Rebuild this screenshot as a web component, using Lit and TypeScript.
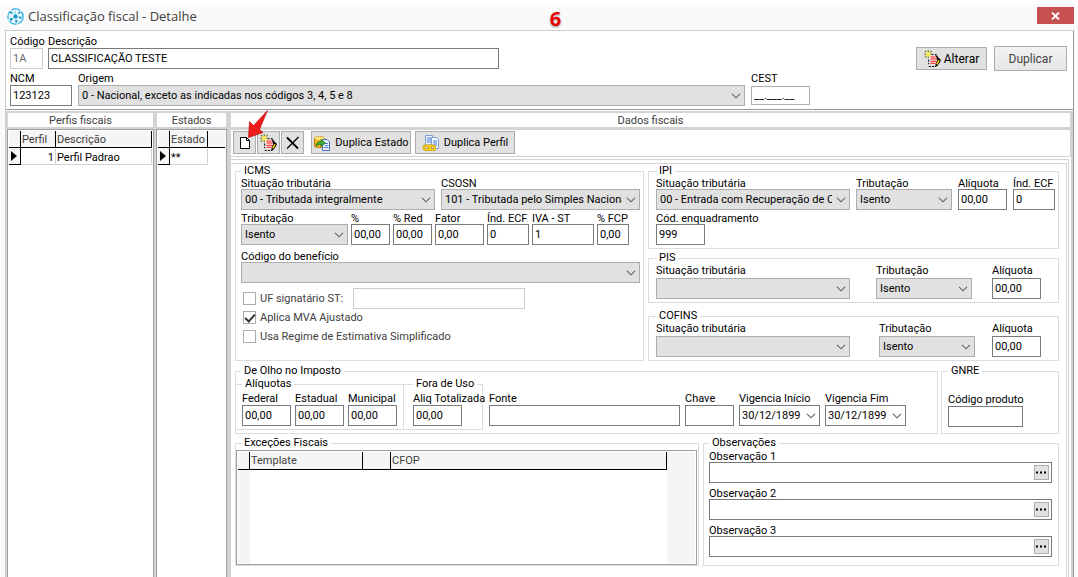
import { LitElement, html, svg, css } from "lit";
import { customElement } from "lit/decorators.js";

const chevron = html`<svg class="chev" width="10" height="6" viewBox="0 0 10 6" aria-hidden="true">
  <path d="M1 0.8 L5 4.8 L9 0.8" fill="none" stroke="#606060" stroke-width="1.1" />
</svg>`;

const noteShape = svg`
  <path d="M5.5 4.5 H11.5 L13.5 6.5 V13.5 H4.5 V8" fill="#fff" />
  <path d="M4.5 9v4.5M7 4.5h4.5l1.5 1.5M4.5 15.5h7" fill="none" stroke="#000" stroke-dasharray="2 1" />
  <path d="M6 6.5h5M6 8.5h6M6 10.5h6M6 12.5h5" stroke="#f00000" />
  <path d="M4 0v2M4 6v2M0 4h2M6 4h2M0.8 0.8l1.6 1.6M7.2 0.8L5.6 2.4M0.8 7.2l1.6-1.6" stroke="#77701c" />
  <path d="M2.2 2.2l3.6 3.6M5.8 2.2L2.2 5.8" stroke="#ffee30" stroke-width="1.4" />
  <path d="M10.5 4 L16 9.5 L15 11.5 L12.5 15 L10.5 15.5 L11 13 L12.5 9.5z" fill="#000" />
  <path d="M14.2 9.6 L12 13.6" stroke="#ffd800" stroke-width="1.4" />`;

const icons = {
  app: html`<svg width="17" height="17" viewBox="0 0 17 17" aria-hidden="true">
    <circle cx="8.5" cy="8.5" r="7.6" fill="#eaf8fd" stroke="#2fb1d9" stroke-width="1.3" stroke-dasharray="9 1.5" />
    <path d="M8.5 8.5L4 4M8.5 8.5L12.5 4.5M8.5 8.5L13.5 9.5M8.5 8.5L9.5 13.5M8.5 8.5L4 11.5M8.5 8.5L8 3" stroke="#5cc4e4" stroke-width="0.8" />
    <g fill="#1597c4"><circle cx="8.5" cy="8.5" r="2" /><circle cx="4" cy="4.6" r="1.2" /><circle cx="12.4" cy="4.6" r="1.1" />
    <circle cx="13.3" cy="9.6" r="1.2" /><circle cx="9.4" cy="13.2" r="1.2" /><circle cx="4.2" cy="11.4" r="1.3" /></g>
  </svg>`,
  edit: html`<svg width="17" height="17" viewBox="0 0 16 16" aria-hidden="true">${noteShape}</svg>`,
  page: html`<svg width="12" height="14" viewBox="0 0 12 14" aria-hidden="true">
    <path d="M1.5 1.5 H7.5 L10.5 4.5 V12.5 H1.5z" fill="#fff" stroke="#000" />
    <path d="M7.5 1.5 V4.5 H10.5" fill="none" stroke="#000" />
  </svg>`,
  remove: html`<svg width="14" height="14" viewBox="0 0 14 14" aria-hidden="true">
    <path d="M1 1.5 L12 12.5" stroke="#000" stroke-width="1.8" /><path d="M12.5 1 L1 12.5" stroke="#000" stroke-width="1.3" />
  </svg>`,
  state: html`<svg width="18" height="18" viewBox="0 0 18 18" aria-hidden="true">
    <path d="M1.5 4.5 C1.5 2 11.5 2 11.5 4.5 V12 C11.5 14 1.5 14 1.5 12z" fill="#f5b81c" stroke="#b57a06" />
    <ellipse cx="6.5" cy="4.3" rx="4.6" ry="1.7" fill="#ffe27a" />
    <path d="M9.5 5.5 H14 L16.5 8 V16.5 H9.5z" fill="#eef4ff" stroke="#4a6fb5" />
    <path d="M12 9.5h3M12 11.5h3.5M11 13.5h4.5" stroke="#4a7fd8" />
    <path d="M3 12 C3 9 5 7.5 8 7.5 V5.5 L12.5 9 L8 12.5 V10.3 C6 10.3 4.5 11 3 12z" fill="#3fae3a" stroke="#15681a" stroke-width="0.7" />
  </svg>`,
  profile: html`<svg width="18" height="18" viewBox="0 0 18 18" aria-hidden="true">
    <path d="M3.5 1.5 H10.5 V11.5 H3.5z" fill="#eef4ff" stroke="#7f9cd0" />
    <path d="M5 4h4M5 6h4M5 8h4" stroke="#4a7fd8" />
    <path d="M9.5 3.5 H14.5 L16.5 5.5 V14.5 H9.5z" fill="#f4f8ff" stroke="#7f9cd0" />
    <path d="M11 7h4M11 9h4M11 11h4" stroke="#4a7fd8" />
    <rect x="1.8" y="11.8" width="7" height="4" rx="2" fill="none" stroke="#b88a00" stroke-width="2.4" />
    <rect x="6.8" y="11.8" width="6" height="4" rx="2" fill="none" stroke="#b88a00" stroke-width="2.4" />
    <rect x="1.8" y="11.8" width="7" height="4" rx="2" fill="none" stroke="#ffdc28" stroke-width="1.2" />
    <rect x="6.8" y="11.8" width="6" height="4" rx="2" fill="none" stroke="#ffdc28" stroke-width="1.2" />
  </svg>`,
  marker: html`<svg class="marker" width="6" height="10" viewBox="0 0 6 10" aria-hidden="true"><path d="M0 0 L6 5 L0 10z" /></svg>`,
};

@customElement("app-root")
export class AppRoot extends LitElement {
  static styles = css`
    :host {
      display: block;
      font-family: Roboto, "Liberation Sans", sans-serif;
      font-size: 11px;
      line-height: 12px;
      color: #000;
    }
    * { box-sizing: border-box; }
    .window {
      display: flex;
      flex-direction: column;
      min-height: 100vh;
      padding: 0 4px 0 5px;
      border-top: 4px solid #fff;
      background: #fafafa;
      position: relative;
    }
    .titlebar {
      display: flex;
      align-items: center;
      gap: 4px;
      height: 26px;
      padding: 0 0 2px 2px;
      font: 13px/18px "Open Sans", "Noto Sans", sans-serif;
      color: #404040;
    }
    .titlebar h1 { margin: 0; font: inherit; flex: 1; }
    .titlebar svg { flex: none; }
    .close {
      align-self: flex-start;
      display: grid;
      place-items: center;
      width: 37px;
      height: 17px;
      margin-top: 3px;
      padding: 0;
      border: 0;
      background: #c75050;
    }
    .step {
      position: absolute;
      left: 51%;
      top: 2px;
      font: 700 20px/26px "Open Sans", sans-serif;
      color: #e60000;
      text-shadow: 0 0 2px #fff, 0 1px 2px #777;
    }
    .pointer { position: absolute; left: 247px; top: 106px; pointer-events: none; }
    .client {
      flex: 1;
      display: flex;
      flex-direction: column;
      border: 1px solid #ccc;
      border-right-color: #999;
      border-bottom: 0;
      background: #fff;
    }
    .header {
      display: flex;
      justify-content: space-between;
      padding: 5px 6px 3px 4px;
      border-bottom: 1px solid #999;
    }
    .ident { flex: 1; display: flex; flex-direction: column; gap: 4px; }
    .ident-top { display: grid; grid-template-columns: 33px minmax(0, 451fr) 306fr; gap: 5px; }
    .ident-bottom { display: grid; grid-template-columns: 62px minmax(0, 1fr) 59px; gap: 6px; }
    .header-actions { display: flex; align-items: flex-start; gap: 7px; padding-top: 11px; margin-left: 106px; }

    .field { display: flex; flex-direction: column; min-width: 0; }
    .field > label { white-space: nowrap; }
    .inner .field > label { height: 12px; line-height: 14px; }
    .spaced .field { gap: 2px; }
    input, select, button { font: inherit; color: inherit; border-radius: 0; }
    .text {
      width: 100%;
      height: 21px;
      padding: 0 2px;
      border: 1px solid #7a7a7a;
      background: #fff;
      outline: 0;
    }
    .text.off { border-color: #ccc; color: #6d6d6d; }
    .text.mask { height: 19px; margin-top: 1px; border-color: #b0b0b0; }
    .combo { display: grid; align-items: center; min-width: 0; }
    .combo > * { grid-area: 1 / 1; }
    .combo select {
      appearance: none;
      width: 100%;
      height: 21px;
      padding: 0 17px 0 3px;
      border: 1px solid #adadad;
      background: #e1e1e1;
      outline: 0;
    }
    .combo .text { padding-right: 16px; }
    .chev { justify-self: end; margin-right: 4px; pointer-events: none; }
    .drop {
      justify-self: end;
      display: grid;
      place-items: center;
      width: 18px;
      height: 19px;
      padding: 0;
      border: 0;
      background: none;
    }
    .drop .chev { margin: 0; justify-self: center; }

    .btn {
      display: flex;
      align-items: center;
      justify-content: center;
      gap: 4px;
      height: 23px;
      min-width: 23px;
      padding: 0;
      border: 1px solid #adadad;
      background: #e1e1e1;
      white-space: nowrap;
    }
    .btn svg { flex: none; }
    .btn.tool { width: 23px; }
    .header-actions .btn { font-size: 12px; gap: 3px; }
    .btn.alter { width: 71px; }
    .btn.dup { width: 73px; height: 25px; background: linear-gradient(#f2f2f2, #e6e6e6); color: #444; margin-top: -1px; }

    .body {
      flex: 1;
      display: grid;
      grid-template-columns: 147px 71px minmax(0, 1fr);
      column-gap: 2px;
      padding: 1px 2px 0 1px;
      background: #d3d3d3;
      border-top: 1px solid #fff;
    }
    .pane { display: flex; flex-direction: column; min-width: 0; }
    .pane h2 {
      margin: 1px 1px 3px;
      padding: 2px 0 0;
      font: inherit;
      color: #404040;
      text-align: center;
      background: #fff;
    }
    .list { flex: 1; margin-top: -1px; padding: 1px 1px 0; border: 1px solid #a0a0a0; border-bottom: 0; background: #fff; }
    .detail { padding-left: 2px; }
    .detail h2 { margin-left: 0; }

    table { border-collapse: separate; border-spacing: 0; table-layout: fixed; width: 100%; }
    th { height: 17px; padding: 1px 1px 0; font-weight: 400; text-align: left; color: #404040; background: #f5f5f5;
      border-right: 1px solid #000; border-bottom: 1px solid #000; }
    td { height: 17px; padding: 3px 1px 0; border-right: 1px solid #d3d3d3; border-bottom: 1px solid #d3d3d3; }
    td.mark { background: #f5f5f5; border-color: #000; padding: 0 2px; }
    .marker { display: block; }
    .num { text-align: right; }
    .none { border-right: 0; }
    td.none { border: 0; }
    .c-mark { width: 12px; }
    .c-perfil { width: 35px; }
    .c-estado { width: 38px; }

    .toolbar { display: flex; gap: 1px; padding: 1px 2px 2px; border: 1px solid #d3d3d3; border-width: 0 1px 1px 0; background: #fff; }
    .toolbar .wide { width: 100px; margin-left: 3px; }
    .toolbar .first { margin-left: 6px; }
    .outer { flex: 1; display: flex; background: #fff; padding: 2px 2px 0 0; }
    .mid { flex: 1; display: flex; min-width: 0; border: 1px solid #d3d3d3; border-width: 1px 1px 0 0; padding: 3px 1px 0 0; }
    .inner {
      flex: 1;
      min-width: 0;
      padding: 1px 7px 11px 4px;
      border: 1px solid #d3d3d3;
      border-width: 1px 1px 0 0;
      background: #fff;
    }

    fieldset { min-width: 0; margin: 0; padding: 0 3px 3px 5px; border: 1px solid #dcdcdc; }
    legend { padding: 0 3px; height: 12px; }
    .taxes { display: grid; grid-template-columns: minmax(0, 409fr) minmax(0, 411fr); gap: 4px; }
    .stack { display: flex; flex-direction: column; gap: 3px; }
    .stack fieldset { padding-left: 7px; }
    .stack .cofins { margin-top: auto; }
    .line { display: grid; margin-bottom: 2px; }
    .line:last-child { margin-bottom: 0; }
    .icms-a { grid-template-columns: minmax(0, 194fr) minmax(0, 199fr); gap: 6px; }
    .icms-b { grid-template-columns: 107fr 39fr 39fr 49fr 42fr 62fr 32fr; gap: 3px; padding-right: 11px; margin-bottom: 5px; }
    .icms-b > *, .ipi-a > * { min-width: 0; }
    .ipi-a { grid-template-columns: minmax(0, 193fr) 96px 49px 42px; gap: 6px; }
    .ipi-b { grid-template-columns: 49px; }
    .pis-a { grid-template-columns: minmax(0, 1fr) 96px 49px; gap: 20px; padding-right: 14px; }
    .pis-a .grow { margin-right: 6px; }
    .cof-a { grid-template-columns: minmax(0, 1fr) 96px 49px; gap: 17px; padding-right: 14px; }
    .cof-a .grow { margin-right: 12px; }

    .checks { display: flex; flex-direction: column; gap: 6px; margin: 5px 0 14px 2px; color: #404040; }
    .check { display: flex; align-items: center; gap: 4px; height: 13px; line-height: 14px; }
    .check.tall { height: 21px; margin-bottom: -4px; }
    .check .text { width: 172px; margin-left: 6px; }
    .check input[type="checkbox"] {
      appearance: none;
      display: grid;
      place-items: center;
      width: 13px;
      height: 13px;
      margin: 0;
      border: 1px solid #adadad;
      background: #fff;
    }
    .check input:checked::after {
      content: "";
      width: 4px;
      height: 8px;
      margin-top: -2px;
      border: solid #333;
      border-width: 0 2px 2px 0;
      transform: rotate(42deg);
    }

    .second { display: grid; grid-template-columns: minmax(0, 1fr) 118px; gap: 3px; margin: 4px 0 3px; }
    .olho { padding: 0 31px 3px 0; }
    .olho > legend { margin-left: 5px; }
    .olho-row { display: flex; align-items: flex-end; gap: 5px; margin-top: 1px; }
    .rates { display: flex; margin-right: 1px; }
    .rates fieldset { border-left: 0; }
    .rates .rate-line { display: grid; grid-template-columns: 49px 49px 49px; gap: 4px; padding-top: 2px; }
    .rates .field, .olho-row > .field { gap: 1px; }
    .rates .ali { width: 168px; padding-left: 6px; }
    .rates .use { width: 79px; padding-left: 9px; }
    .olho-row > .field { margin-bottom: 4px; }
    .fonte { flex: 1; }
    .chave { width: 49px; flex: none; }
    .date { width: 81px; flex: none; }
    .gnre { padding: 16px 35px 6px 6px; }
    .gnre .field { gap: 1px; }

    .third { display: grid; grid-template-columns: minmax(0, 464fr) minmax(0, 356fr); gap: 4px; }
    .exc { display: flex; flex-direction: column; padding: 0; }
    .exc > legend { margin-left: 5px; }
    .grid-box { height: 115px; margin: 1px 1px 0 0; padding: 1px; border: 1px solid #a0a0a0; display: grid; background: #fff; }
    .grid-box table { height: 111px; }
    .grid-box th { height: 18px; }
    .grid-box td { border: 0; }
    .grid-box .shade { background: #f5f5f5; }
    .grid-box .rest { border: 0; }
    .c-blank { width: 28px; }
    .c-template { width: 113px; }
    .c-rest { width: 28px; }
    .obs { display: flex; flex-direction: column; padding: 0 6px 8px 5px; }
    .obs-list { display: grid; gap: 4px; padding-top: 1px; }
    .more {
      justify-self: end;
      display: grid;
      place-items: center;
      width: 15px;
      height: 15px;
      margin-right: 3px;
      padding: 0;
      border: 1px solid #adadad;
      background: #e1e1e1;
    }
  `;

  private seq = 0;

  private text(label: string, value = "", cls = "", inputCls = "") {
    const id = `f${this.seq++}`;
    return html`<div class="field ${cls}">
      <label for=${id}>${label}</label>
      <input id=${id} class="text ${inputCls}" .value=${value} ?disabled=${inputCls === "off"} />
    </div>`;
  }

  private combo(label: string, value = "", cls = "") {
    const id = `f${this.seq++}`;
    return html`<div class="field ${cls}">
      <label for=${id}>${label}</label>
      <div class="combo"><select id=${id}><option>${value}</option></select>${chevron}</div>
    </div>`;
  }

  private date(label: string, value: string) {
    const id = `f${this.seq++}`;
    return html`<div class="field date">
      <label for=${id}>${label}</label>
      <div class="combo">
        <input id=${id} class="text" .value=${value} />
        <button class="drop" aria-label="Abrir calendário">${chevron}</button>
      </div>
    </div>`;
  }

  private observation(n: number) {
    return html`<div class="field">
      <label for="obs${n}">Observação ${n}</label>
      <div class="combo">
        <input id="obs${n}" class="text" />
        <button class="more" aria-label="Editar observação ${n}">
          <svg width="11" height="3" viewBox="0 0 11 3" aria-hidden="true"><path d="M0 0.5h2v2h-2zM4 0.5h2v2h-2zM8 0.5h2v2h-2z" /></svg>
        </button>
      </div>
    </div>`;
  }

  private check(label: string, on: boolean) {
    return html`<label class="check"><input type="checkbox" .checked=${on} />${label}</label>`;
  }

  private renderHeader() {
    return html`<header class="header">
      <div class="ident">
        <div class="ident-top">
          ${this.text("Código", "1A", "", "off")}
          ${this.text("Descrição", "CLASSIFICAÇÃO TESTE")}
        </div>
        <div class="ident-bottom">
          ${this.text("NCM", "123123")}
          ${this.combo("Origem", "0 - Nacional, exceto as indicadas nos códigos 3, 4, 5 e 8")}
          ${this.text("CEST", "__.___.__", "", "mask")}
        </div>
      </div>
      <div class="header-actions">
        <button class="btn alter">${icons.edit}Alterar</button>
        <button class="btn dup">Duplicar</button>
      </div>
    </header>`;
  }

  private renderLists() {
    return html`
      <section class="pane">
        <h2>Perfis fiscais</h2>
        <div class="list">
          <table>
            <colgroup><col class="c-mark" /><col class="c-perfil" /><col /></colgroup>
            <thead><tr><th></th><th>Perfil</th><th>Descrição</th></tr></thead>
            <tbody><tr><td class="mark">${icons.marker}</td><td class="num">1</td><td>Perfil Padrao</td></tr></tbody>
          </table>
        </div>
      </section>
      <section class="pane">
        <h2>Estados</h2>
        <div class="list">
          <table>
            <colgroup><col class="c-mark" /><col class="c-estado" /><col /></colgroup>
            <thead><tr><th></th><th>Estado</th><th class="none"></th></tr></thead>
            <tbody><tr><td class="mark">${icons.marker}</td><td>**</td><td class="none"></td></tr></tbody>
          </table>
        </div>
      </section>`;
  }

  private renderTaxes() {
    return html`<div class="taxes">
      <fieldset>
        <legend>ICMS</legend>
        <div class="line icms-a">
          ${this.combo("Situação tributária", "00 - Tributada integralmente")}
          ${this.combo("CSOSN", "101 - Tributada pelo Simples Nacional")}
        </div>
        <div class="line icms-b">
          ${this.combo("Tributação", "Isento")}
          ${this.text("%", "00,00")} ${this.text("% Red", "00,00")} ${this.text("Fator", "0,00")}
          ${this.text("Índ. ECF", "0")} ${this.text("IVA - ST", "1")} ${this.text("% FCP", "0,00")}
        </div>
        ${this.combo("Código do benefício")}
        <div class="checks">
          <div class="check tall">
            ${this.check("UF signatário ST:", false)}
            <input class="text off" aria-label="UF signatário ST" disabled />
          </div>
          ${this.check("Aplica MVA Ajustado", true)}
          ${this.check("Usa Regime de Estimativa Simplificado", false)}
        </div>
      </fieldset>
      <div class="stack">
        <fieldset>
          <legend>IPI</legend>
          <div class="line ipi-a">
            ${this.combo("Situação tributária", "00 - Entrada com Recuperação de Crédito")}
            ${this.combo("Tributação", "Isento")}
            ${this.text("Alíquota", "00,00")} ${this.text("Índ. ECF", "0")}
          </div>
          <div class="line ipi-b">${this.text("Cód. enquadramento", "999")}</div>
        </fieldset>
        <fieldset>
          <legend>PIS</legend>
          <div class="line spaced pis-a">
            ${this.combo("Situação tributária", "", "grow")}
            ${this.combo("Tributação", "Isento")} ${this.text("Alíquota", "00,00")}
          </div>
        </fieldset>
        <fieldset class="cofins">
          <legend>COFINS</legend>
          <div class="line spaced cof-a">
            ${this.combo("Situação tributária", "", "grow")}
            ${this.combo("Tributação", "Isento")} ${this.text("Alíquota", "00,00")}
          </div>
        </fieldset>
      </div>
    </div>`;
  }

  private renderLower() {
    return html`
      <div class="second">
        <fieldset class="olho">
          <legend>De Olho no Imposto</legend>
          <div class="olho-row">
            <div class="rates">
              <fieldset class="ali">
                <legend>Alíquotas</legend>
                <div class="rate-line">
                  ${this.text("Federal", "00,00")} ${this.text("Estadual", "00,00")} ${this.text("Municipal", "00,00")}
                </div>
              </fieldset>
              <fieldset class="use">
                <legend>Fora de Uso</legend>
                <div class="rate-line">${this.text("Aliq Totalizada", "00,00")}</div>
              </fieldset>
            </div>
            ${this.text("Fonte", "", "fonte")} ${this.text("Chave", "", "chave")}
            ${this.date("Vigencia Início", "30/12/1899")} ${this.date("Vigencia Fim", "30/12/1899")}
          </div>
        </fieldset>
        <fieldset class="gnre">
          <legend>GNRE</legend>
          ${this.text("Código produto")}
        </fieldset>
      </div>
      <div class="third">
        <fieldset class="exc">
          <legend>Exceções Fiscais</legend>
          <div class="grid-box">
            <table>
              <colgroup><col class="c-mark" /><col class="c-template" /><col class="c-blank" /><col /><col class="c-rest" /></colgroup>
              <thead><tr><th></th><th>Template</th><th></th><th>CFOP</th><th class="rest"></th></tr></thead>
              <tbody><tr><td class="shade"></td><td></td><td></td><td></td><td class="shade"></td></tr></tbody>
            </table>
          </div>
        </fieldset>
        <fieldset class="obs">
          <legend>Observações</legend>
          <div class="obs-list">${[1, 2, 3].map((n) => this.observation(n))}</div>
        </fieldset>
      </div>`;
  }

  render() {
    this.seq = 0;
    return html`<div class="window">
      <div class="titlebar">
        ${icons.app}
        <h1>Classificação fiscal - Detalhe</h1>
        <button class="close" aria-label="Fechar">
          <svg width="9" height="8" viewBox="0 0 9 8" aria-hidden="true"><path d="M1 0.5 L8 7.5 M8 0.5 L1 7.5" stroke="#fff" stroke-width="1.8" /></svg>
        </button>
      </div>
      <main class="client">
        ${this.renderHeader()}
        <div class="body">
          ${this.renderLists()}
          <section class="pane detail">
            <h2>Dados fiscais</h2>
            <div class="toolbar">
              <button class="btn tool" aria-label="Novo">${icons.page}</button>
              <button class="btn tool" aria-label="Alterar">${icons.edit}</button>
              <button class="btn tool" aria-label="Excluir">${icons.remove}</button>
              <button class="btn wide first">${icons.state}Duplica Estado</button>
              <button class="btn wide">${icons.profile}Duplica Perfil</button>
            </div>
            <div class="outer"><div class="mid"><div class="inner">
              ${this.renderTaxes()} ${this.renderLower()}
            </div></div></div>
          </section>
        </div>
      </main>
      <span class="step">6</span>
      <svg class="pointer" width="22" height="30" viewBox="0 0 22 30" aria-hidden="true">
        <path d="M20.5 0.5 L12.5 19.5 L16 22.5 L1.5 27.5 L2.5 11.5 L6.5 15.5 Z" fill="#ee1c1c" stroke="#b00" stroke-width="0.6" />
      </svg>
    </div>`;
  }
}
